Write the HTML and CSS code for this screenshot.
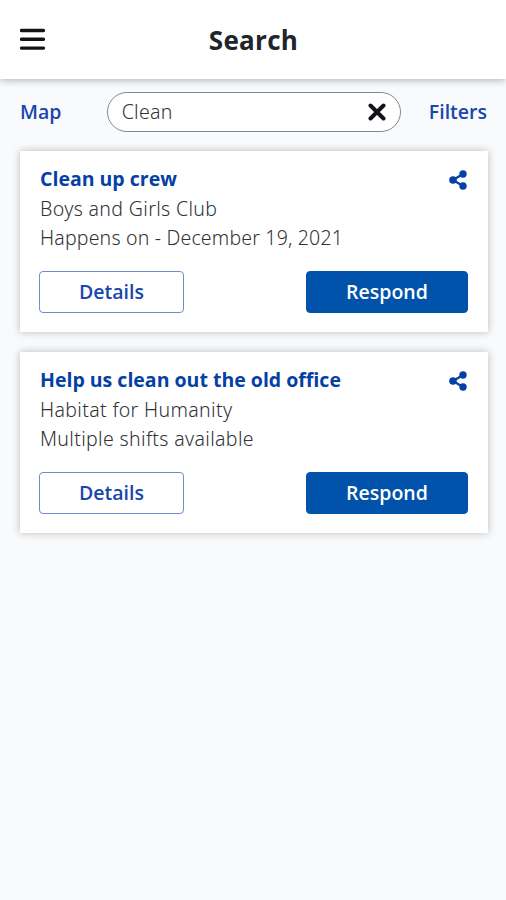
FILE: index.html
```html
<!DOCTYPE html>
<html lang="en">
<head>
<meta charset="utf-8">
<title>Search</title>
<link rel="stylesheet" href="styles.css">
</head>
<body>
<header class="topbar">
  <svg class="menu" viewBox="0 0 26 24" aria-hidden="true"><path d="M1.500 2.500h22M1.500 11.300h22M1.500 20.100h22" stroke="#111519" stroke-width="3.400" stroke-linecap="round"/></svg>
  <h1 class="title">Search</h1>
</header>
<div class="searchbar">
  <a class="link">Map</a>
  <div class="field">
    <span>Clean</span>
    <svg class="clear" viewBox="0 0 18 18" aria-hidden="true"><path d="M2.500 2.500l13 13M15.500 2.500l-13 13" stroke="#111519" stroke-width="4" stroke-linecap="round"/></svg>
  </div>
  <a class="link">Filters</a>
</div>
<main class="results">
  <article class="card">
    <div class="heading"><h2>Clean up crew</h2>
      <svg class="share" viewBox="0 0 18 20" aria-hidden="true"><path d="M14 4L4 10l10 6" fill="none" stroke="#0540a5" stroke-width="2.200"/><circle cx="14" cy="4" r="3.700"/><circle cx="4" cy="10" r="3.800"/><circle cx="14" cy="16" r="3.700"/></svg>
    </div>
    <p>Boys and Girls Club</p>
    <p class="date">Happens on - December 19, 2021</p>
    <div class="actions"><button class="details">Details</button><button class="respond">Respond</button></div>
  </article>
  <article class="card">
    <div class="heading"><h2>Help us clean out the old office</h2>
      <svg class="share" viewBox="0 0 18 20" aria-hidden="true"><path d="M14 4L4 10l10 6" fill="none" stroke="#0540a5" stroke-width="2.200"/><circle cx="14" cy="4" r="3.700"/><circle cx="4" cy="10" r="3.800"/><circle cx="14" cy="16" r="3.700"/></svg>
    </div>
    <p>Habitat for Humanity</p>
    <p>Multiple shifts available</p>
    <div class="actions"><button class="details">Details</button><button class="respond">Respond</button></div>
  </article>
</main>
</body>
</html>
```
FILE: styles.css
```css
* { box-sizing: border-box; }
body { margin: 0; min-height: 900px; background: #f8fafc; color: #303235; font: 300 19.5px/29.4px "Noto Sans", "Open Sans", sans-serif; }
.topbar { height: 79px; padding: 0 20px; display: grid; grid-template-columns: 26px 1fr 26px; align-items: center; background: #fff; box-shadow: 0 1px 8px rgba(0,0,0,.3); }
.menu { width: 26px; height: 24px; }
.title { margin: 1px 0 0 1px; text-align: center; font: 700 26px/36px "Open Sans", sans-serif; letter-spacing: .3px; color: #20252b; }
.searchbar { display: flex; justify-content: space-between; align-items: center; margin: 13px 19px 0 20px; height: 39px; }
.link { color: #1746ad; font-family: "Open Sans", sans-serif; font-weight: 600; }
.field { width: 294px; height: 40px; margin-left: 17px; padding: 0 14px; display: flex; align-items: center; justify-content: space-between; border: 1px solid #85898e; border-radius: 20px; background: #fff; letter-spacing: .3px; }
.clear { width: 18px; height: 18px; }
.results { display: grid; gap: 20px; padding: 19px 18px 0 20px; margin-top: 1px; }
.card { height: 181px; padding: 13px 20px 20px; background: #fff; box-shadow: 0 0 8px rgba(0,0,0,.25); }
.card p { margin: 0; letter-spacing: .35px; }
.card .date { letter-spacing: .18px; }
.heading { display: flex; justify-content: space-between; align-items: center; height: 30px; }
.heading h2 { margin: 0 0 1px; font: 700 19.5px/29px "Open Sans", sans-serif; color: #0540a5; }
.share { width: 18px; height: 20px; margin: 1px 1px 0 0; fill: #0540a5; }
.actions { display: flex; justify-content: space-between; margin: 18px 0 0 -1px; }
button { height: 42px; padding: 0; border-radius: 4px; font: 600 19.5px/28px "Open Sans", sans-serif; }
.details { width: 145px; border: 1px solid #6f8cc8; background: #fff; color: #1746ad; }
.respond { width: 162px; border: 1px solid #0052aa; background: #0052aa; color: #fff; }
```
